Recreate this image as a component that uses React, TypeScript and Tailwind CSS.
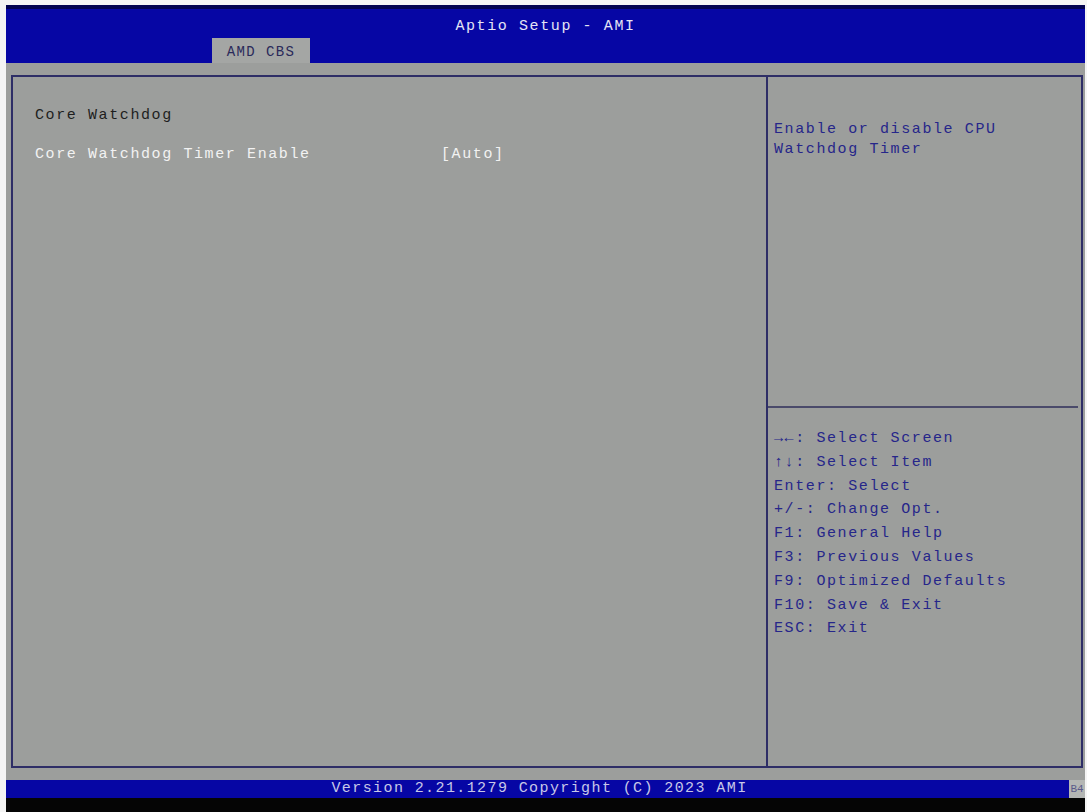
import React from "react";

const font = { fontFamily: '"Liberation Mono", "DejaVu Sans Mono", monospace' };

export default function App() {
  const keys = [
    ["→←", ": Select Screen"],
    ["↑↓", ": Select Item"],
    ["Enter", ": Select"],
    ["+/-", ": Change Opt."],
    ["F1", ": General Help"],
    ["F3", ": Previous Values"],
    ["F9", ": Optimized Defaults"],
    ["F10", ": Save & Exit"],
    ["ESC", ": Exit"],
  ];
  return (
    <div
      className="w-[1087px] h-[812px] bg-[#f4f4f4] pt-[5px] pl-[6px] pr-[2px] overflow-hidden text-[15px] tracking-[1.6px]"
      style={font}
    >
      <div className="flex flex-col h-[807px] bg-[#9c9e9c]">
        {/* Header */}
        <div className="relative h-[58px] bg-[#0606a4] border-t-[4px] border-[#020250] flex flex-col">
          <div className="text-center text-[#e4e4f4] mt-[8px] leading-[20px]">Aptio Setup - AMI</div>
          <div className="absolute left-[206px] bottom-0 w-[98px] h-[25px] bg-[#a4a6a4] flex items-center justify-center pt-[4px] text-[#2a2a5a] text-[14px] tracking-[1.4px]">
            AMD CBS
          </div>
        </div>
        {/* Body */}
        <div className="flex-1 pl-[5px] pr-[2px] pt-[12px] pb-[12px] flex flex-col">
          <div className="flex-1 flex border-2 border-[#2e2e66]">
            <div className="w-[755px] border-r-2 border-[#2e2e66] pl-[22px] pt-[29px]">
              <div className="text-[#1e1e1e] leading-[20px]">Core Watchdog</div>
              <div className="flex mt-[19px] leading-[20px] text-[#f2f2f2]">
                <span className="w-[406px]">Core Watchdog Timer Enable</span>
                <span>[Auto]</span>
              </div>
            </div>
            <div className="flex-1 flex flex-col pr-[3px]">
              <div className="h-[331px] border-b-2 border-[#4a4a6a] pl-[6px] pt-[43px] text-[#26268a] leading-[20px]">
                <div>Enable or disable CPU</div>
                <div>Watchdog Timer</div>
              </div>
              <div className="pl-[6px] pt-[19px] text-[#26268a] leading-[23.8px]">
                {keys.map(([k, v]) => (
                  <div key={k}>
                    {k}
                    {v}
                  </div>
                ))}
              </div>
            </div>
          </div>
        </div>
        {/* Footer */}
        <div className="h-[18px] bg-[#0606a4] flex items-center">
          <div className="flex-1 text-center pl-[4px] text-[#c8c8e8] text-[15px] tracking-[1.4px] leading-[18px]">
            Version 2.21.1279 Copyright (C) 2023 AMI
          </div>
          <div className="shrink-0 h-[18px] w-[16px] bg-[#b4b6b4] text-[#5a5a8a] text-[11px] tracking-normal leading-[18px] text-center overflow-visible">
            B4
          </div>
        </div>
        <div className="h-[14px] bg-[#050505]" />
      </div>
    </div>
  );
}
